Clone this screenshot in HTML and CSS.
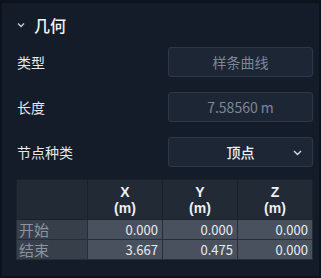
FILE: index.html
```html
<!DOCTYPE html>
<html lang="zh">
<head>
  <meta charset="UTF-8">
  <title>几何</title>
  <link rel="stylesheet" href="styles.css">
</head>
<body>
  <div class="panel">
    <div class="section-title">
      <svg class="caret" width="8" height="6" viewBox="0 0 8 6"><path d="M1 1.5 L4 4.5 L7 1.5" fill="none" stroke="#c9d0da" stroke-width="1.3"/></svg>
      <span>几何</span>
    </div>

    <div class="form-row">
      <label>类型</label>
      <div class="field readonly">样条曲线</div>
    </div>
    <div class="form-row">
      <label>长度</label>
      <div class="field readonly">7.58560 m</div>
    </div>
    <div class="form-row">
      <label>节点种类</label>
      <div class="field select">
        <span>顶点</span>
        <svg class="select-arrow" width="9" height="6" viewBox="0 0 9 6"><path d="M1 1 L4.5 4.5 L8 1" fill="none" stroke="#d5dbe3" stroke-width="1.4"/></svg>
      </div>
    </div>

    <table class="coords">
      <colgroup>
        <col class="c-label"><col class="c-val"><col class="c-val"><col class="c-val">
      </colgroup>
      <thead>
        <tr><th></th><th>X<br>(m)</th><th>Y<br>(m)</th><th>Z<br>(m)</th></tr>
      </thead>
      <tbody>
        <tr><td class="row-name">开始</td><td>0.000</td><td>0.000</td><td>0.000</td></tr>
        <tr><td class="row-name">结束</td><td>3.667</td><td>0.475</td><td>0.000</td></tr>
      </tbody>
    </table>
  </div>
</body>
</html>
```

FILE: styles.css
```css
html, body {
  margin: 0;
  height: 100%;
  background: #0d131c;
}
body {
  padding: 3px 2px 2px 2px;
  box-sizing: border-box;
  font-family: "Noto Sans CJK SC", "Noto Sans", sans-serif;
  color: #e4e8ee;
}
.panel {
  height: 100%;
  background: #141c29;
  padding: 10px 6px 0 14px;
  box-sizing: border-box;
}
.section-title {
  display: flex;
  align-items: center;
  height: 23px;
  padding-left: 1px;
  font-size: 16px;
  font-weight: 500;
  color: #f2f4f7;
}
.caret {
  margin: 0 9px 0 0;
}
.form-row {
  display: grid;
  grid-template-columns: 1fr 145px;
  align-items: center;
  height: 30px;
  margin-top: 15px;
}
.section-title + .form-row {
  margin-top: 11px;
}
label {
  font-size: 14px;
  padding-left: 1px;
  color: #e6e9ee;
}
.field {
  height: 30px;
  box-sizing: border-box;
  border: 1px solid #2d3747;
  border-radius: 3px;
  background: #1d2635;
  display: flex;
  align-items: center;
  justify-content: center;
  font-size: 14px;
  position: relative;
}
.readonly {
  color: #7d8796;
}
.select {
  color: #eef1f5;
  font-weight: 500;
}
.select-arrow {
  position: absolute;
  right: 10px;
  top: 12px;
}
.coords {
  margin-top: 12px;
  width: 297px;
  border-collapse: collapse;
  table-layout: fixed;
  font-size: 13px;
}
.c-label { width: 71px; }
.c-val { width: 75px; }
.coords th {
  height: 40px;
  background: #222a36;
  border: 1px solid #1a212c;
  font-family: "Liberation Sans", sans-serif;
  font-weight: 700;
  font-size: 14px;
  line-height: 16px;
  color: #eef1f5;
  padding: 0;
  box-sizing: border-box;
}
.coords td {
  height: 20px;
  padding: 0 4px;
  border: 1px solid #262e3a;
  background: #49515e;
  text-align: right;
  color: #e8ebf0;
  line-height: 18px;
  box-sizing: border-box;
}
.coords td.row-name {
  background: #373f4b;
  text-align: left;
  padding-left: 2px;
  font-size: 15px;
  color: #8c939d;
}
```
